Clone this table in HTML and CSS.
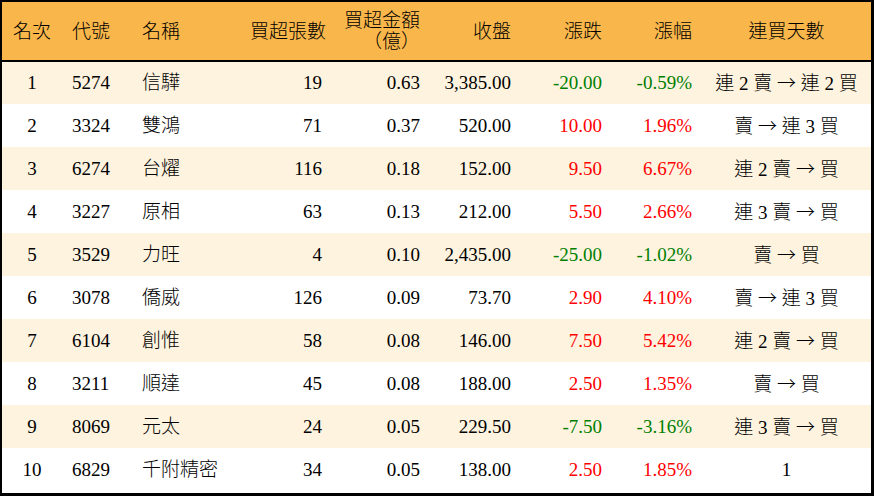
FILE: index.html
```html
<!DOCTYPE html>
<html lang="zh-Hant">
<head>
<meta charset="utf-8">
<title>買超排行</title>
<link rel="stylesheet" href="styles.css">
</head>
<body>
<div class="frame">
<table class="rank">
<colgroup>
<col class="c1"><col class="c2"><col class="c3"><col class="c4"><col class="c5"><col class="c6"><col class="c7"><col class="c8"><col class="c9">
</colgroup>
<thead>
<tr>
<th class="ctr">名次</th>
<th class="lft">代號</th>
<th class="lft">名稱</th>
<th class="rgt">買超張數</th>
<th class="rgt">買超金額<br>（億）</th>
<th class="rgt">收盤</th>
<th class="rgt">漲跌</th>
<th class="rgt">漲幅</th>
<th class="ctr">連買天數</th>
</tr>
</thead>
<tbody>
<tr class="odd"><td class="ctr">1</td><td class="lft">5274</td><td class="lft">信驊</td><td class="rgt">19</td><td class="rgt">0.63</td><td class="rgt">3,385.00</td><td class="rgt dn">-20.00</td><td class="rgt dn">-0.59%</td><td class="ctr">連 2 賣 <span class="arw">→</span> 連 2 買</td></tr>
<tr><td class="ctr">2</td><td class="lft">3324</td><td class="lft">雙鴻</td><td class="rgt">71</td><td class="rgt">0.37</td><td class="rgt">520.00</td><td class="rgt up">10.00</td><td class="rgt up">1.96%</td><td class="ctr">賣 <span class="arw">→</span> 連 3 買</td></tr>
<tr class="odd"><td class="ctr">3</td><td class="lft">6274</td><td class="lft">台燿</td><td class="rgt">116</td><td class="rgt">0.18</td><td class="rgt">152.00</td><td class="rgt up">9.50</td><td class="rgt up">6.67%</td><td class="ctr">連 2 賣 <span class="arw">→</span> 買</td></tr>
<tr><td class="ctr">4</td><td class="lft">3227</td><td class="lft">原相</td><td class="rgt">63</td><td class="rgt">0.13</td><td class="rgt">212.00</td><td class="rgt up">5.50</td><td class="rgt up">2.66%</td><td class="ctr">連 3 賣 <span class="arw">→</span> 買</td></tr>
<tr class="odd"><td class="ctr">5</td><td class="lft">3529</td><td class="lft">力旺</td><td class="rgt">4</td><td class="rgt">0.10</td><td class="rgt">2,435.00</td><td class="rgt dn">-25.00</td><td class="rgt dn">-1.02%</td><td class="ctr">賣 <span class="arw">→</span> 買</td></tr>
<tr><td class="ctr">6</td><td class="lft">3078</td><td class="lft">僑威</td><td class="rgt">126</td><td class="rgt">0.09</td><td class="rgt">73.70</td><td class="rgt up">2.90</td><td class="rgt up">4.10%</td><td class="ctr">賣 <span class="arw">→</span> 連 3 買</td></tr>
<tr class="odd"><td class="ctr">7</td><td class="lft">6104</td><td class="lft">創惟</td><td class="rgt">58</td><td class="rgt">0.08</td><td class="rgt">146.00</td><td class="rgt up">7.50</td><td class="rgt up">5.42%</td><td class="ctr">連 2 賣 <span class="arw">→</span> 買</td></tr>
<tr><td class="ctr">8</td><td class="lft">3211</td><td class="lft">順達</td><td class="rgt">45</td><td class="rgt">0.08</td><td class="rgt">188.00</td><td class="rgt up">2.50</td><td class="rgt up">1.35%</td><td class="ctr">賣 <span class="arw">→</span> 買</td></tr>
<tr class="odd"><td class="ctr">9</td><td class="lft">8069</td><td class="lft">元太</td><td class="rgt">24</td><td class="rgt">0.05</td><td class="rgt">229.50</td><td class="rgt dn">-7.50</td><td class="rgt dn">-3.16%</td><td class="ctr">連 3 賣 <span class="arw">→</span> 買</td></tr>
<tr><td class="ctr">10</td><td class="lft">6829</td><td class="lft">千附精密</td><td class="rgt">34</td><td class="rgt">0.05</td><td class="rgt">138.00</td><td class="rgt up">2.50</td><td class="rgt up">1.85%</td><td class="ctr">1</td></tr>
</tbody>
</table>
</div>
</body>
</html>
```
FILE: styles.css
```css
html, body {
  margin: 0;
  padding: 0;
  background: #ffffff;
}
.frame {
  width: 874px;
  height: 496px;
  box-sizing: border-box;
  border-style: solid;
  border-color: #000000;
  border-width: 2px 3px 3px 2px;
  overflow: hidden;
  background: #ffffff;
}
.rank {
  width: 869px;
  border-collapse: collapse;
  table-layout: fixed;
  font-family: "Liberation Serif", "Noto Sans CJK TC", serif;
  font-size: 19px;
  font-weight: 300;
  color: #000000;
}
.c1 { width: 60px; }
.c2 { width: 70px; }
.c3 { width: 108px; }
.c4 { width: 92px; }
.c5 { width: 98px; }
.c6 { width: 91px; }
.c7 { width: 91px; }
.c8 { width: 90px; }
.c9 { width: 169px; }
.rank thead tr {
  height: 59px;
  background: #f9b74b;
}
.rank thead th {
  font-weight: 300;
  line-height: 21px;
  padding: 0 10px;
  border-bottom: 2px solid #000000;
  white-space: nowrap;
}
.rank tbody tr {
  height: 43px;
}
.rank tbody tr.odd {
  background: #fef3df;
}
.rank td {
  padding: 0 10px;
  line-height: 22px;
  white-space: nowrap;
}
.arw {
  font-family: "Noto Sans CJK TC", sans-serif;
}
.ctr { text-align: center; }
.lft { text-align: left; }
.rgt { text-align: right; }
.up { color: #ff0000; }
.dn { color: #008000; }
```
